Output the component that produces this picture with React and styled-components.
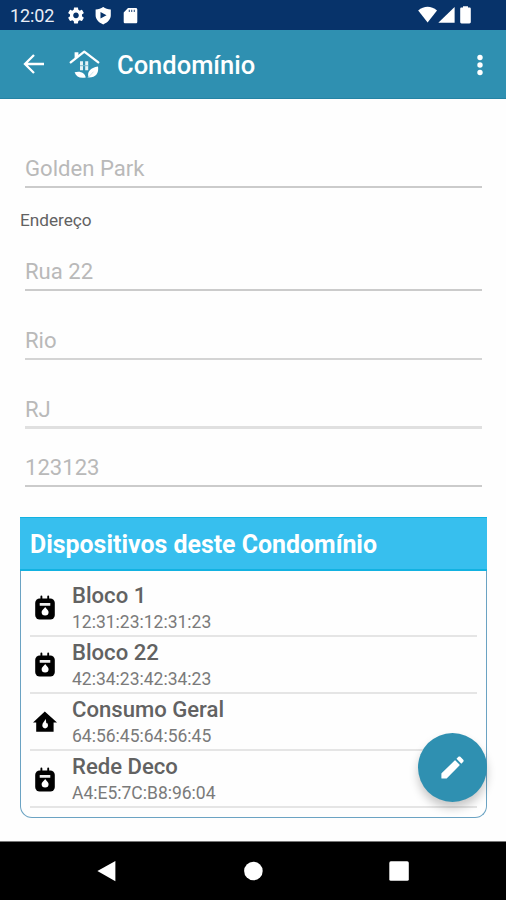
import React from 'react';
import styled, { createGlobalStyle } from 'styled-components';

const COLORS = {
  statusBar: '#07336a',
  primary: '#2f90b1',
  accent: '#37bfee',
  accentDark: '#12b2e1',
  border: '#6ba3c3',
  line: '#cbcbcb',
  divider: '#e5e5e5',
  hint: '#b9b9b9',
  text: '#626262',
};

const FIELDS = [
  { id: 'street', value: 'Rua 22', height: 59, line: COLORS.line },
  { id: 'city', value: 'Rio', height: 69, line: '#d4d4d4' },
  { id: 'state', value: 'RJ', height: 69, line: '#e0e0e0', thick: true },
  { id: 'zip', value: '123123', height: 58, line: COLORS.line },
];

const DEVICES = [
  { id: 1, name: 'Bloco 1', mac: '12:31:23:12:31:23', icon: 'meter' },
  { id: 2, name: 'Bloco 22', mac: '42:34:23:42:34:23', icon: 'meter' },
  { id: 3, name: 'Consumo Geral', mac: '64:56:45:64:56:45', icon: 'house' },
  { id: 4, name: 'Rede Deco', mac: 'A4:E5:7C:B8:96:04', icon: 'meter' },
];

const App = () => {
  return (
    <>
      <GlobalStyle />
      <Screen>
        <StatusBar>
          <Clock>12:02</Clock>
          <StatusIcons />
          <SignalIcons />
        </StatusBar>
        <AppBar>
          <BackIcon />
          <LogoIcon />
          <Title>Condomínio</Title>
          <MoreIcon />
        </AppBar>
        <Content>
          <Field $height={89} $line={COLORS.line}>
            Golden Park
          </Field>
          <Label>Endereço</Label>
          {FIELDS.map(({ id, value, height, line, thick }) => (
            <Field key={id} $height={height} $line={line} $thick={thick}>
              {value}
            </Field>
          ))}
          <Panel>
            <PanelHeader>Dispositivos deste Condomínio</PanelHeader>
            <DeviceList>
              {DEVICES.map((device) => (
                <Device key={device.id} {...device} />
              ))}
            </DeviceList>
          </Panel>
        </Content>
        <Fab aria-label="Editar">
          <svg width="29" height="29" viewBox="0 0 24 24" fill="#fff">
            <path
              d="M3.3 17.2V20.7h3.5L17.4 9.9l-3.3-3.3z"
              stroke="#fff"
              strokeWidth="1"
              strokeLinejoin="round"
            />
            <path d="M20.9 7.2c.45-.45.45-1.1 0-1.600l-2.400-2.400c-.5-.45-1.200-.45-1.600 0l-1.600 1.600 4 4z" />
          </svg>
        </Fab>
        <NavBar>
          <NavItem>
            <svg width="20" height="22" viewBox="0 0 20 22" fill="#fff">
              <path d="M18.4 1v20.3L.4 11z" />
            </svg>
          </NavItem>
          <NavItem>
            <svg width="20" height="20" viewBox="0 0 20 20" fill="#fff">
              <circle cx="10.4" cy="10" r="9.3" />
            </svg>
          </NavItem>
          <NavItem>
            <svg width="20" height="20" viewBox="0 0 20 20" fill="#fff">
              <rect x="0.3" y="0.3" width="19.5" height="19.5" rx="1.6" />
            </svg>
          </NavItem>
        </NavBar>
      </Screen>
    </>
  );
};

const Device = ({ name, mac, icon }) => {
  return (
    <DeviceRow>
      {icon === 'house' ? <HouseIcon /> : <MeterIcon />}
      <div>
        <DeviceName>{name}</DeviceName>
        <DeviceMac>{mac}</DeviceMac>
      </div>
    </DeviceRow>
  );
};

const StatusIcons = () => (
  <StatusSvg width="72" height="18" viewBox="0 0 72 18" fill="#fff">
    {/* settings */}
    <g transform="translate(-1.6 -1.2) scale(0.8)">
      <path d="M19.43 12.98c.04-.32.07-.64.07-.98s-.03-.66-.07-.98l2.11-1.65c.19-.15.24-.42.12-.64l-2-3.46c-.12-.22-.39-.3-.61-.22l-2.49 1c-.52-.4-1.08-.73-1.69-.98l-.38-2.65C14.46 2.18 14.25 2 14 2h-4c-.25 0-.46.18-.49.42l-.38 2.65c-.61.25-1.17.59-1.69.98l-2.49-1c-.23-.09-.49 0-.61.22l-2 3.46c-.13.22-.07.49.12.64l2.11 1.65c-.04.32-.07.65-.07.98s.03.66.07.98l-2.11 1.65c-.19.15-.24.42-.12.64l2 3.46c.12.22.39.3.61.22l2.49-1c.52.4 1.08.73 1.69.98l.38 2.65c.03.24.24.42.49.42h4c.25 0 .46-.18.49-.42l.38-2.65c.61-.25 1.17-.59 1.69-.98l2.49 1c.23.09.49 0 .61-.22l2-3.46c.12-.22.07-.49-.12-.64l-2.11-1.65zM12 15.5c-1.93 0-3.5-1.57-3.5-3.5s1.57-3.5 3.5-3.5 3.5 1.57 3.5 3.5-1.57 3.5-3.5 3.5z" />
    </g>
    {/* play protect */}
    <path
      fillRule="evenodd"
      d="M35.2-.1c2 1.600 4.600 2.400 7.600 2.500v5.800c0 4-2.800 7-7.600 9.200-4.800-2.200-7.600-5.200-7.600-9.200V2.400c3-.1 5.600-.9 7.600-2.500zM32.500 5v6.600l6-3.300z"
    />
    {/* sd card */}
    <path
      fillRule="evenodd"
      d="M60 .9h7.700c1 0 1.600.6 1.600 1.600v12.200c0 1-.6 1.600-1.600 1.600H57.300c-1 0-1.600-.6-1.600-1.600V5.400zM60.800 2.800v2.300h.9V2.800zm2.500 0v2.300h.9V2.800zm2.500 0v2.300h.9V2.800z"
    />
  </StatusSvg>
);

const SignalIcons = () => (
  <SignalSvg width="58" height="20" viewBox="0 0 58 20" fill="#fff">
    <path d="M.2 5.500C6 .6 13.200.6 19 5.500L9.600 17.400z" />
    <path d="M20.300 17.800 36.600 2v15.800z" />
    <path d="M45 2.600V1.300h5v1.300h1.400c.9 0 1.400.5 1.400 1.400v13c0 .9-.5 1.400-1.400 1.400h-7.800c-.9 0-1.400-.5-1.400-1.400V4c0-.9.500-1.400 1.400-1.400z" />
  </SignalSvg>
);

const BackIcon = () => (
  <BackSvg width="22" height="22" viewBox="0 0 22 22">
    <path d="M21 11H2.500M11 2 2 11l9 9" fill="none" stroke="#fff" strokeWidth="2.3" />
  </BackSvg>
);

const LogoIcon = () => (
  <LogoSvg width="32" height="32" viewBox="0 0 32 32">
    <path
      d="M1.700 14.300 15.300 3.600l14 10.700"
      fill="none"
      stroke="#fff"
      strokeWidth="2.3"
      strokeLinecap="round"
      strokeLinejoin="round"
    />
    <path d="M5.600 4.300h3.800v3.200l-3.800 3z" fill="#fff" />
    <path d="M11 13.300h3v9h-3zm5.200 0h3v9h-3z" fill="#e4f2f6" />
    <path d="M11 17.200h8.200v1H11z" fill="#7ab8cc" />
    <path d="M5.600 24.300c5-1.800 10.200.1 11.200 5.200-5.700 1.200-9.500-.5-11.200-5.200z" fill="#fff" />
    <path d="M29 18.500c1.100 6.500-2.200 11.100-9.300 11-2.300-5.200 1.700-9.900 9.300-11z" fill="#fff" />
    <path d="m19 29.700 5.500-6" stroke="#c3dde5" strokeWidth="0.9" />
  </LogoSvg>
);

const MoreIcon = () => (
  <MoreSvg width="8" height="24" viewBox="0 0 8 24" fill="#fff">
    <circle cx="4" cy="4.5" r="2.7" />
    <circle cx="4" cy="12" r="2.7" />
    <circle cx="4" cy="19.5" r="2.7" />
  </MoreSvg>
);

const MeterIcon = () => (
  <DeviceSvg width="26" height="26" viewBox="0 0 26 26">
    <path d="M9.400 1.400v4M16.200 1.400v4" stroke="#000" strokeWidth="1.9" strokeLinecap="round" />
    <rect x="3.2" y="3.4" width="19.6" height="21.2" rx="4.5" />
    <rect x="7.7" y="8" width="10.6" height="2.7" rx="0.5" fill="#eee" />
    <path d="M13.200 11.900c1 1.700 3.400 3 3.400 5.200a3.500 3.500 0 0 1-7 0c0-2.200 2.600-3.400 3.600-5.200z" fill="#fff" />
  </DeviceSvg>
);

const HouseIcon = () => (
  <DeviceSvg width="26" height="26" viewBox="0 0 26 26">
    <path
      fillRule="evenodd"
      d="M12.800 2.600 25 13.400h-3.400v9.400H4.200v-9.400H1zM13.400 10c-.4 2-3.100 3.800-3.100 6.300 0 1.800 1.200 3.100 2.800 3.100s2.900-1.300 2.900-3.100c0-1-.4-1.900-1-2.600l-.8.900c.1-1.700-.1-3.200-.8-4.600z"
    />
  </DeviceSvg>
);

const GlobalStyle = createGlobalStyle`
  body {
    margin: 0;
    font-family: Roboto, 'Liberation Sans', sans-serif;
    background: #fefefe;
  }

  svg {
    display: block;
    flex-shrink: 0;
  }
`;

const Screen = styled.div`
  position: relative;
  display: flex;
  flex-direction: column;
  box-sizing: border-box;
  width: 506px;
  height: 900px;
  overflow: hidden;
`;

const StatusBar = styled.header`
  display: flex;
  height: 30px;
  padding: 0 30px 0 10px;
  background: ${COLORS.statusBar};
`;

const Clock = styled.span`
  width: 58px;
  font-size: 18px;
  line-height: 32px;
  letter-spacing: -0.1px;
  color: #e9eef6;
`;

const StatusSvg = styled.svg`
  margin-top: 7px;
`;

const SignalSvg = styled.svg`
  margin: 5px 0 0 auto;
`;

const AppBar = styled.div`
  display: flex;
  align-items: center;
  box-sizing: border-box;
  height: 69px;
  padding: 0 22px 0 23px;
  border-bottom: 1px solid #2483a4;
  background: ${COLORS.primary};
`;

const BackSvg = styled.svg`
  margin-right: 24px;
`;

const LogoSvg = styled.svg`
  margin-right: 16px;
`;

const Title = styled.h1`
  flex: 1;
  margin: 0;
  padding-top: 2px;
  font-size: 25.5px;
  font-weight: 500;
  line-height: 32px;
  color: #fff;
`;

const MoreSvg = styled.svg`
  margin-top: 1px;
`;

const Content = styled.main`
  flex: 1;
  display: flex;
  flex-direction: column;
  padding: 0 19px 0 20px;
`;

const Field = styled.div`
  display: flex;
  align-items: flex-end;
  box-sizing: border-box;
  height: ${(p) => p.$height}px;
  margin: 0 5px;
  padding-bottom: ${(p) => (p.$thick ? 3 : 4)}px;
  border-bottom: ${(p) => (p.$thick ? 3 : 2)}px solid ${(p) => p.$line};
  font-size: 22.1px;
  line-height: 27px;
  color: ${COLORS.hint};
`;

const Label = styled.div`
  height: 44px;
  font-size: 17.2px;
  line-height: 64px;
  color: ${COLORS.text};
`;

const Panel = styled.section`
  box-sizing: border-box;
  height: 301px;
  margin-top: 30px;
  border: 1.5px solid ${COLORS.border};
  border-top: 0;
  border-radius: 0 0 12px 12px;
`;

const PanelHeader = styled.h2`
  box-sizing: border-box;
  height: 54px;
  margin: 0 -1px;
  padding-left: 10px;
  border: solid ${COLORS.accentDark};
  border-width: 1px 0 2px;
  background: ${COLORS.accent};
  font-size: 24.9px;
  font-weight: 700;
  line-height: 53px;
  color: #fff;
`;

const DeviceList = styled.div`
  padding: 8.5px 9px 0;
`;

const DeviceRow = styled.div`
  display: flex;
  box-sizing: border-box;
  height: 57.2px;
  border-bottom: 2px solid ${COLORS.divider};
`;

const DeviceSvg = styled.svg`
  margin: 15.5px 14px 0 2px;
`;

const DeviceName = styled.div`
  font-size: 22.1px;
  font-weight: 500;
  line-height: 31px;
  color: ${COLORS.text};
`;

const DeviceMac = styled.div`
  font-size: 17.5px;
  line-height: 22px;
  color: #7a7a7a;
`;

const Fab = styled.button`
  position: absolute;
  right: 19px;
  bottom: 98px;
  display: grid;
  place-items: center;
  width: 69px;
  height: 69px;
  padding: 0;
  border: 0;
  border-radius: 50%;
  background: ${COLORS.primary};
  box-shadow: 0 6px 10px rgba(0, 0, 0, 0.22);
`;

const NavBar = styled.nav`
  display: flex;
  justify-content: center;
  align-items: center;
  box-sizing: border-box;
  height: 59px;
  border-top: 1px solid #777;
  background: #000;
`;

const NavItem = styled.div`
  display: grid;
  place-items: center;
  width: 146px;
`;

export default App;
